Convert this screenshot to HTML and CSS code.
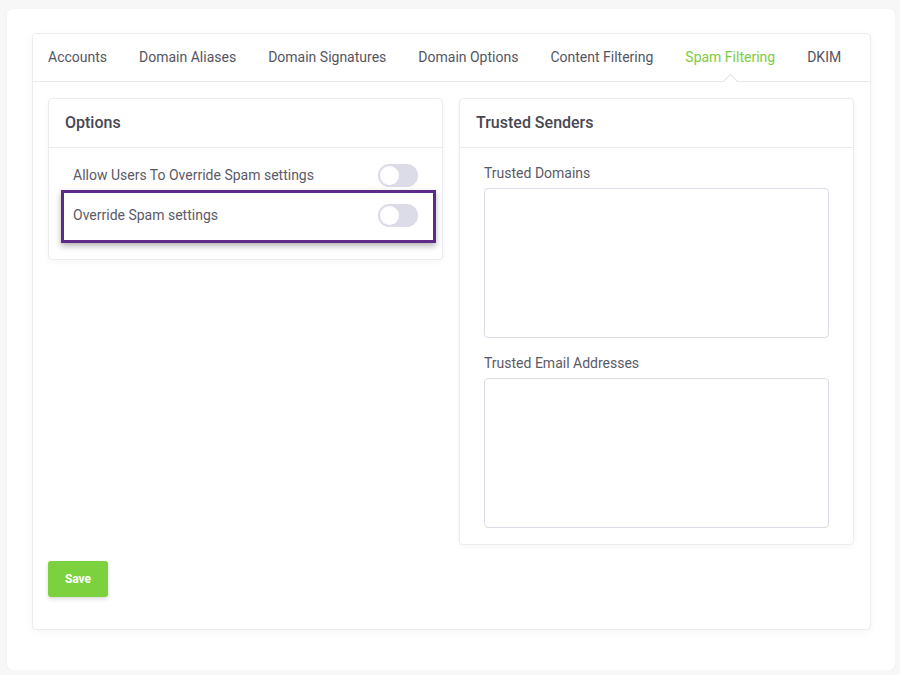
FILE: index.html
```html
<!DOCTYPE html>
<html>
<head>
  <title>Spam Filtering</title>
  <link rel="stylesheet" href="styles.css">
</head>
<body>
  <div class="page">
    <div class="card">
      <div class="tabs">
        <a class="tab">Accounts</a>
        <a class="tab">Domain Aliases</a>
        <a class="tab">Domain Signatures</a>
        <a class="tab">Domain Options</a>
        <a class="tab">Content Filtering</a>
        <a class="tab active">Spam Filtering</a>
        <a class="tab">DKIM</a>
      </div>

      <div class="card-body">
        <div class="columns">
          <div class="panel">
            <div class="panel-header">Options</div>
            <div class="panel-body options">
              <div class="option-row">
                <span>Allow Users To Override Spam settings</span>
                <span class="toggle"></span>
              </div>
              <div class="option-row highlight">
                <span>Override Spam settings</span>
                <span class="toggle"></span>
              </div>
            </div>
          </div>

          <div class="panel">
            <div class="panel-header">Trusted Senders</div>
            <div class="panel-body senders">
              <label class="field-label">Trusted Domains</label>
              <textarea class="field-box"></textarea>
              <label class="field-label">Trusted Email Addresses</label>
              <textarea class="field-box"></textarea>
            </div>
          </div>
        </div>

        <button class="save-button">Save</button>
      </div>
    </div>
  </div>
</body>
</html>
```

FILE: styles.css
```css
html, body {
  margin: 0;
  padding: 0;
  background-color: #f7f7f8;
  font-family: Roboto, "Liberation Sans", sans-serif;
  color: #55555f;
}

.page {
  margin: 9px 5px 0 7px;
  padding: 24px 24px 40px 25px;
  background: #fff;
  border-radius: 6px;
  box-shadow: 0 1px 3px rgba(0, 0, 0, 0.04);
}

.card {
  border: 1px solid #ebebf0;
  border-radius: 4px;
  box-shadow: 0 2px 8px rgba(0, 0, 0, 0.04);
}

.tabs {
  display: flex;
  margin-left: -1px;
  border-bottom: 1px solid #e8e8ee;
}

.tab {
  position: relative;
  padding: 0 16px;
  line-height: 47px;
  font-size: 14px;
  color: #55555f;
  cursor: pointer;
}

.tab.active {
  color: #7ccc41;
}

.tab.active::after {
  content: "";
  position: absolute;
  left: 50%;
  bottom: -6px;
  width: 10px;
  height: 10px;
  margin-left: -5px;
  background: #fff;
  border-top: 1px solid #e3e3ea;
  border-left: 1px solid #e3e3ea;
  transform: rotate(45deg);
}

.card-body {
  padding: 16px 16px 32px 15px;
}

.columns {
  display: grid;
  grid-template-columns: 1fr 1fr;
  gap: 16px;
  align-items: start;
}

.panel {
  border: 1px solid #ebebf0;
  border-radius: 4px;
  box-shadow: 0 2px 6px rgba(0, 0, 0, 0.04);
}

.panel-header {
  height: 48px;
  line-height: 48px;
  padding: 0 16px;
  font-size: 16px;
  font-weight: 500;
  color: #474753;
  border-bottom: 1px solid #ebebf0;
}

.panel-body.options {
  padding: 7px 24px 24px 24px;
}

.option-row {
  display: flex;
  align-items: center;
  justify-content: space-between;
  height: 40px;
  font-size: 14px;
  color: #5a5a66;
}

.option-row.highlight {
  position: relative;
}

.option-row.highlight::after {
  content: "";
  position: absolute;
  left: -12px;
  right: -18px;
  top: -5px;
  bottom: -8px;
  border: 3px solid #5e2a87;
  box-shadow: 0 3px 6px rgba(0, 0, 0, 0.3);
}

.toggle {
  position: relative;
  width: 40px;
  height: 23px;
  border-radius: 12px;
  background: #dcdbe8;
}

.toggle::before {
  content: "";
  position: absolute;
  left: 2px;
  top: 2px;
  width: 19px;
  height: 19px;
  border-radius: 50%;
  background: #fff;
}

.panel-body.senders {
  display: flex;
  flex-direction: column;
  padding: 15px 24px 16px 24px;
}

.field-label {
  font-size: 14px;
  line-height: 20px;
  color: #5a5a66;
  margin-bottom: 5px;
}

.field-box {
  height: 150px;
  box-sizing: border-box;
  border: 1px solid #dcdbe8;
  border-radius: 4px;
  resize: none;
  margin: 0 0 15px 0;
  font-family: inherit;
}

.field-box:last-child {
  margin-bottom: 0;
}

.save-button {
  margin-top: 16px;
  width: 60px;
  height: 36px;
  border: none;
  border-radius: 3px;
  background: #7cd23e;
  color: #fff;
  font-family: Roboto, "Liberation Sans", sans-serif;
  font-size: 12px;
  font-weight: bold;
  box-shadow: 0 2px 4px rgba(0, 0, 0, 0.15);
  cursor: pointer;
}
```
